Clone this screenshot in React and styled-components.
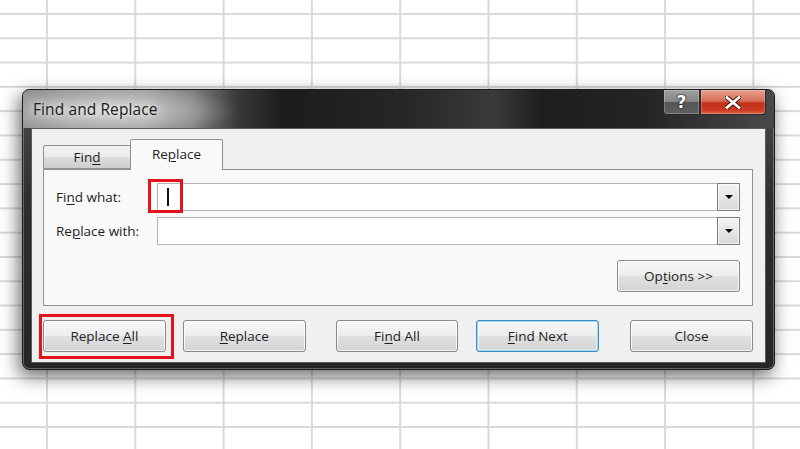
import React from 'react';
import styled, { createGlobalStyle } from 'styled-components';

const Global = createGlobalStyle`
  html, body { margin: 0; padding: 0; }
  * { box-sizing: border-box; }
  body {
    width: 800px;
    height: 449px;
    overflow: hidden;
    background-color: #ffffff;
    background-image:
      linear-gradient(to right, #d9d9d9 0, #d9d9d9 2px, transparent 2px),
      linear-gradient(to bottom, #d9d9d9 0, #d9d9d9 2px, transparent 2px);
    background-size: 88.3px 24.3px;
    background-position: 46px 13px;
    font-family: "Open Sans", "Noto Sans", sans-serif;
  }
`;

const Page = styled.div`
  padding: 89px 0 0 22px;
`;

const Window = styled.div`
  width: 753px;
  height: 281px;
  display: flex;
  flex-direction: column;
  border-radius: 7px;
  border: 1px solid #1c1c1c;
  background: linear-gradient(to bottom, #4c4c4c 0%, #2e2e2e 40%, #262626 100%);
  box-shadow:
    inset 0 0 0 1px rgba(255, 255, 255, 0.28),
    -3px 6px 18px rgba(0, 0, 0, 0.6);
  padding: 0 8px 7px 8px;
`;

const TitleBar = styled.div`
  margin: 0 -8px;
  height: 38px;
  display: flex;
  align-items: flex-start;
  padding: 0 8px 0 10px;
  border-radius: 6px 6px 0 0;
  background:
    radial-gradient(ellipse 130px 26px at 85px 21px, rgba(255, 255, 255, 0.6), rgba(255, 255, 255, 0) 100%),
    linear-gradient(to right, #8e8e8e 0px, #9c9c9c 120px, #808080 170px, #383838 215px, #1c1c1c 260px, #262626 380px, #3a3a3a 470px, #1e1e1e 520px, #242424 620px, #4a4a4a 752px);
`;

const Title = styled.div`
  font-size: 15.5px;
  line-height: 38px;
  color: #1b1b1b;
  text-shadow: 0 0 6px rgba(255, 255, 255, 0.9), 0 0 12px rgba(255, 255, 255, 0.6);
  letter-spacing: 0.1px;
`;

const CaptionGroup = styled.div`
  margin-left: auto;
  display: flex;
`;

const CaptionButton = styled.div`
  width: ${p => p.$w}px;
  height: 25px;
  display: flex;
  align-items: center;
  justify-content: center;
  border: 1px solid #2a2a2a;
  border-top: none;
  border-radius: ${p => p.$radius};
  background: ${p => p.$bg};
  box-shadow: inset 0 0 0 1px rgba(255, 255, 255, 0.22);
  color: #fff;
  font-family: "DejaVu Sans", sans-serif;
  font-weight: bold;
  font-size: 17px;
  text-shadow: 0 0 2px #000, 0 0 1px #000;
`;

const Client = styled.div`
  flex: 1;
  background: #f0f0f0;
  border: 1px solid #5a5a5a;
  padding: 10px 12px 10px 11px;
  display: flex;
  flex-direction: column;
`;

const TabStrip = styled.div`
  height: 30px;
  display: flex;
  align-items: flex-end;
`;

const Tab = styled.div`
  position: relative;
  width: ${p => (p.$active ? 93 : 88)}px;
  height: ${p => (p.$active ? 31 : 24)}px;
  margin-left: ${p => (p.$active ? -1 : 0)}px;
  margin-bottom: ${p => (p.$active ? -1 : 0)}px;
  z-index: ${p => (p.$active ? 1 : 0)};
  border: 1px solid #8e9196;
  border-bottom: ${p => (p.$active ? 'none' : '1px solid #8e9196')};
  border-radius: 2px 2px 0 0;
  background: ${p => (p.$active ? '#f9f9f9' : 'linear-gradient(to bottom, #f2f2f2 0%, #ebebeb 50%, #dcdcdc 51%, #cfcfcf 100%)')};
  display: flex;
  align-items: center;
  justify-content: center;
  padding-bottom: ${p => (p.$active ? 2 : 0)}px;
  font-size: 13.5px;
  color: #1e1e1e;
`;

const Panel = styled.div`
  width: 710px;
  border: 1px solid #8e9196;
  background: #f9f9f9;
  padding: 13px 12px 13px 12px;
  display: flex;
  flex-direction: column;
`;

const FieldRow = styled.div`
  display: grid;
  grid-template-columns: 101px 1fr;
  align-items: center;
  height: 28px;
  margin-top: ${p => p.$mt || 0}px;
`;

const Label = styled.div`
  font-size: 13.5px;
  color: #1e1e1e;
`;

const Combo = styled.div`
  position: relative;
  display: flex;
  height: 28px;
`;

const TextBox = styled.div`
  flex: 1;
  height: 100%;
  background: #ffffff;
  border: 1px solid #b4b4b4;
  border-right: none;
  display: flex;
  align-items: center;
  padding-left: 9px;
`;

const Caret = styled.span`
  width: 1.5px;
  height: 18px;
  background: #111;
`;

const DropButton = styled.div`
  width: 23px;
  height: 100%;
  border: 1px solid #7d7d7d;
  background: linear-gradient(to bottom, #f4f4f4 0%, #e6e6e6 50%, #d8d8d8 100%);
  box-shadow: inset 0 0 0 1px rgba(255, 255, 255, 0.7);
  display: flex;
  align-items: center;
  justify-content: center;
`;

const Arrow = styled.span`
  width: 0;
  height: 0;
  border-left: 4px solid transparent;
  border-right: 4px solid transparent;
  border-top: 4px solid #000;
`;

const OptionsRow = styled.div`
  display: flex;
  justify-content: flex-end;
  margin-top: 15px;
`;

const Button = styled.div`
  position: relative;
  width: 123px;
  height: 32px;
  margin-left: ${p => p.$ml || 0}px;
  border: 1px solid ${p => (p.$default ? '#3d8fc4' : '#8a8a8a')};
  border-radius: 3px;
  background: linear-gradient(to bottom, #f6f6f6 0%, #ededed 50%, #e0e0e0 51%, #d4d4d4 100%);
  box-shadow: ${p => (p.$default ? 'inset 0 0 0 1px #9fd3f0, inset 0 0 0 2px rgba(255,255,255,0.5)' : 'inset 0 0 0 1px rgba(255,255,255,0.75)')};
  display: flex;
  align-items: center;
  justify-content: center;
  font-size: 13.5px;
  color: #1e1e1e;
`;

const ButtonRow = styled.div`
  display: flex;
  margin-top: 14px;
`;

const Key = styled.span`
  text-decoration: underline;
  text-underline-offset: 2px;
  text-decoration-thickness: 1px;
`;

const RedBox = styled.div`
  position: absolute;
  border: 3px solid #e3141c;
  pointer-events: none;
  top: ${p => p.$top}px;
  left: ${p => p.$left}px;
  width: ${p => p.$w}px;
  height: ${p => p.$h}px;
`;

const CloseGlyph = () => (
  <svg width="16" height="13" viewBox="0 0 16 13">
    <path d="M2 1.5 L14 11.5 M14 1.5 L2 11.5" stroke="#3a0a05" strokeWidth="4.6" strokeLinecap="square" />
    <path d="M2 1.5 L14 11.5 M14 1.5 L2 11.5" stroke="#ffffff" strokeWidth="2.8" strokeLinecap="square" />
  </svg>
);

export default function App() {
  return (
    <>
      <Global />
      <Page>
        <Window>
          <TitleBar>
            <Title>Find and Replace</Title>
            <CaptionGroup>
              <CaptionButton
                $w={37}
                $radius="0 0 0 4px"
                $bg="linear-gradient(to bottom, #a0a0a0 0%, #858585 48%, #555 52%, #606060 100%)"
              >
                ?
              </CaptionButton>
              <CaptionButton
                $w={66}
                $radius="0 0 4px 0"
                $bg="linear-gradient(to bottom, #e6a190 0%, #d76e58 46%, #c2301a 54%, #cc3a22 85%, #dc6a50 100%)"
              >
                <CloseGlyph />
              </CaptionButton>
            </CaptionGroup>
          </TitleBar>
          <Client>
            <TabStrip>
              <Tab>
                <span>Fin<Key>d</Key></span>
              </Tab>
              <Tab $active>
                <span>Re<Key>p</Key>lace</span>
              </Tab>
            </TabStrip>
            <Panel>
              <FieldRow>
                <Label>Fi<Key>n</Key>d what:</Label>
                <Combo>
                  <TextBox>
                    <Caret />
                  </TextBox>
                  <DropButton><Arrow /></DropButton>
                  <RedBox $top={-4} $left={-9} $w={35} $h={34} />
                </Combo>
              </FieldRow>
              <FieldRow $mt={6}>
                <Label>Re<Key>p</Key>lace with:</Label>
                <Combo>
                  <TextBox />
                  <DropButton><Arrow /></DropButton>
                </Combo>
              </FieldRow>
              <OptionsRow>
                <Button><span>Op<Key>t</Key>ions &gt;&gt;</span></Button>
              </OptionsRow>
            </Panel>
            <ButtonRow>
              <Button>
                <span>Replace <Key>A</Key>ll</span>
                <RedBox $top={-7} $left={-5} $w={135} $h={45} />
              </Button>
              <Button $ml={17}><span><Key>R</Key>eplace</span></Button>
              <Button $ml={30}><span>Fi<Key>n</Key>d All</span></Button>
              <Button $ml={18} $default><span><Key>F</Key>ind Next</span></Button>
              <Button $ml={31}><span>Close</span></Button>
            </ButtonRow>
          </Client>
        </Window>
      </Page>
    </>
  );
}
